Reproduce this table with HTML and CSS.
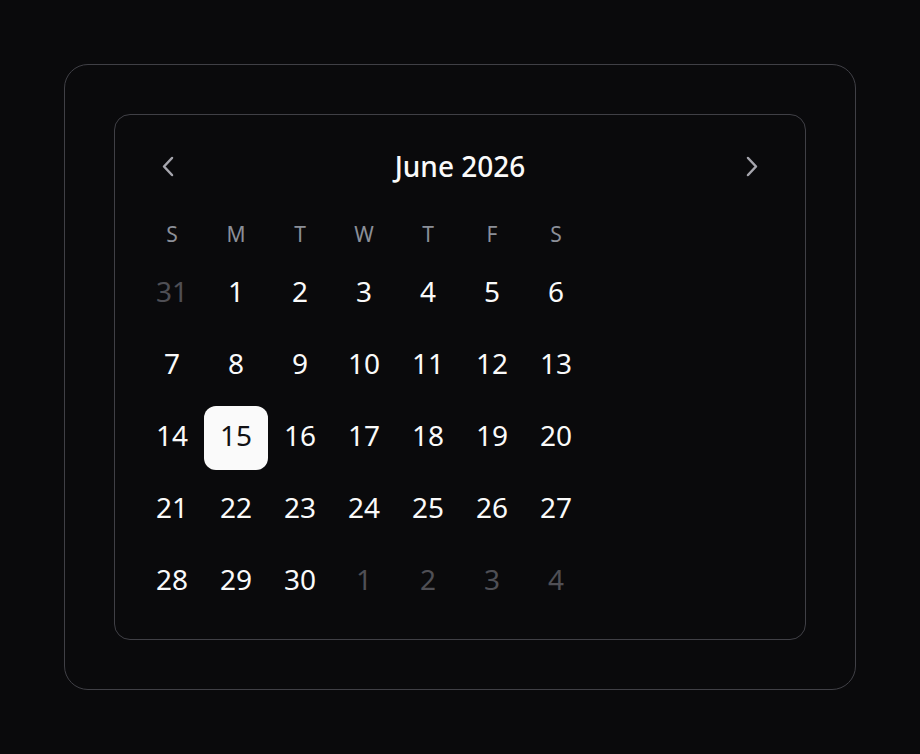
FILE: index.html
```html
<!DOCTYPE html>
<html lang="en">
<head>
<meta charset="utf-8">
<title>Calendar</title>
<link rel="stylesheet" href="styles.css">
</head>
<body>
<div class="frame">
  <div class="calendar">
    <div class="cal-header">
      <button class="nav-btn" aria-label="Previous month">
        <svg width="20" height="22" viewBox="0 0 20 22"><polyline points="14,3 6,11.5 14,20" /></svg>
      </button>
      <div class="cal-title">June 2026</div>
      <button class="nav-btn" aria-label="Next month">
        <svg width="20" height="22" viewBox="0 0 20 22"><polyline points="6,3 14,11.5 6,20" /></svg>
      </button>
    </div>
    <div class="weekdays">
      <span>S</span><span>M</span><span>T</span><span>W</span><span>T</span><span>F</span><span>S</span>
    </div>
    <div class="days">
      <span class="day muted">31</span><span class="day">1</span><span class="day">2</span><span class="day">3</span><span class="day">4</span><span class="day">5</span><span class="day">6</span>
      <span class="day">7</span><span class="day">8</span><span class="day">9</span><span class="day">10</span><span class="day">11</span><span class="day">12</span><span class="day">13</span>
      <span class="day">14</span><span class="day selected">15</span><span class="day">16</span><span class="day">17</span><span class="day">18</span><span class="day">19</span><span class="day">20</span>
      <span class="day">21</span><span class="day">22</span><span class="day">23</span><span class="day">24</span><span class="day">25</span><span class="day">26</span><span class="day">27</span>
      <span class="day">28</span><span class="day">29</span><span class="day">30</span><span class="day muted">1</span><span class="day muted">2</span><span class="day muted">3</span><span class="day muted">4</span>
    </div>
  </div>
</div>
</body>
</html>
```
FILE: styles.css
```css
* { box-sizing: border-box; }
html, body {
  margin: 0;
  height: 100%;
  background: #0a0a0c;
}
body {
  display: flex;
  align-items: center;
  justify-content: center;
  font-family: "Noto Sans", "Open Sans", sans-serif;
  color: #fafafa;
}
.frame {
  width: 792px;
  height: 626px;
  border: 1px solid #404046;
  border-radius: 24px;
  padding: 49px;
}
.calendar {
  width: 692px;
  height: 526px;
  border: 1px solid #404046;
  border-radius: 16px;
  padding: 25px;
  display: flex;
  flex-direction: column;
}
.cal-header {
  height: 52px;
  display: flex;
  align-items: center;
  justify-content: space-between;
  margin-bottom: 28px;
}
.nav-btn {
  width: 56px;
  height: 52px;
  background: none;
  border: none;
  padding: 0;
  display: flex;
  align-items: center;
  justify-content: center;
  cursor: pointer;
}
.nav-btn svg polyline {
  fill: none;
  stroke: #a6a6ae;
  stroke-width: 2.5;
  stroke-linecap: round;
  stroke-linejoin: round;
}
.cal-title {
  font-size: 28px;
  font-weight: 500;
  line-height: 1;
}
.weekdays {
  display: grid;
  grid-template-columns: repeat(7, 64px);
  height: 28px;
  margin-bottom: 14px;
}
.weekdays span {
  display: flex;
  align-items: center;
  justify-content: center;
  font-size: 21px;
  color: #8b8f98;
}
.days {
  display: grid;
  grid-template-columns: repeat(7, 64px);
  grid-auto-rows: 64px;
  row-gap: 8px;
}
.day {
  display: flex;
  align-items: center;
  justify-content: center;
  font-size: 28px;
  color: #fafafa;
  border-radius: 12px;
  padding-bottom: 7px;
}
.day.muted { color: #4f4f55; }
.day.selected {
  background: #fafafa;
  color: #111114;
}
```
